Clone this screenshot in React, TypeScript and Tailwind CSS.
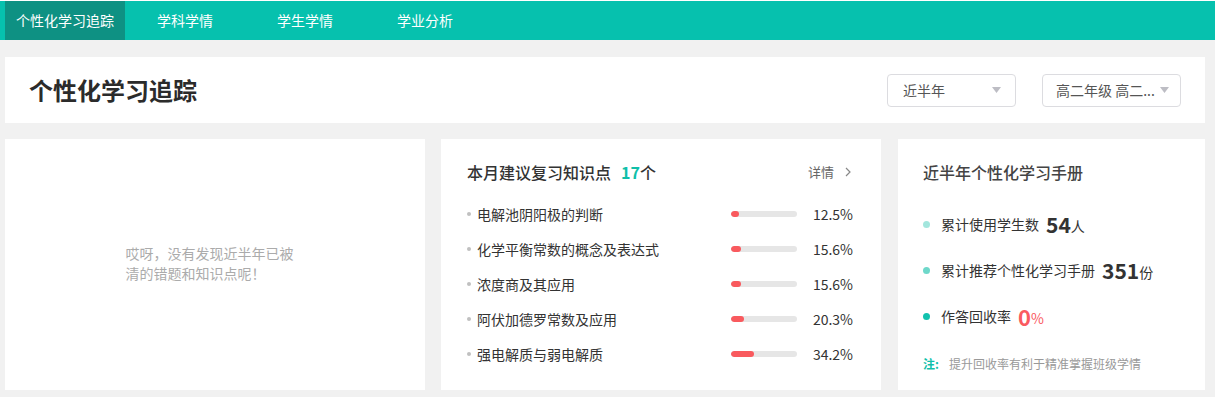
import React from 'react';

const FONT = '"Noto Sans CJK SC", "Noto Sans", "Liberation Sans", sans-serif';

const tabs = ['个性化学习追踪', '学科学情', '学生学情', '学业分析'];

const points = [
  { name: '电解池阴阳极的判断', pct: 12.5 },
  { name: '化学平衡常数的概念及表达式', pct: 15.6 },
  { name: '浓度商及其应用', pct: 15.6 },
  { name: '阿伏加德罗常数及应用', pct: 20.3 },
  { name: '强电解质与弱电解质', pct: 34.2 },
];

const stats = [
  { label: '累计使用学生数', value: '54', unit: '人', dot: 'bg-[#a3e6dd]', red: false },
  { label: '累计推荐个性化学习手册', value: '351', unit: '份', dot: 'bg-[#6ed8ca]', red: false },
  { label: '作答回收率', value: '0', unit: '%', dot: 'bg-[#12c2ae]', red: true },
];

const Caret: React.FC = () => (
  <svg width="9" height="6" viewBox="0 0 9 6" className="shrink-0">
    <path d="M0 0 L9 0 L4.5 6 Z" fill="#bdbdc4" />
  </svg>
);

const Select: React.FC<{ label: string; className?: string }> = ({ label, className }) => (
  <div
    className={`flex h-[33px] items-center justify-between rounded border border-[#dcdce0] bg-white ${className}`}
  >
    <span className="truncate text-[14px] text-[#555]">{label}</span>
    <Caret />
  </div>
);

const App: React.FC = () => {
  return (
    <div className="min-h-[397px] bg-[#f1f1f1]" style={{ fontFamily: FONT }}>
      {/* top nav */}
      <div className="border-t border-white bg-[#06c1ae]">
        <nav className="flex h-[39px] pl-[5px]">
          {tabs.map((t, i) => (
            <div
              key={t}
              className={`flex w-[120px] items-center justify-center text-[14px] text-white ${i === 0 ? 'bg-[#0e9183]' : ''}`}
            >
              {t}
            </div>
          ))}
        </nav>
      </div>

      <div className="pl-[5px] pr-[10px] pt-[17px]">
        {/* page header */}
        <header className="flex h-[66px] items-center justify-between bg-white pl-6 pr-6">
          <h1 className="text-[24px] font-bold text-[#2b2b2b]">个性化学习追踪</h1>
          <div className="flex items-center gap-[26px]">
            <Select label="近半年" className="w-[129px] pl-[15px] pr-[14px]" />
            <Select label="高二年级 高二..." className="w-[139px] pl-[13px] pr-[11px]" />
          </div>
        </header>

        {/* cards */}
        <div className="mt-4 flex h-[251px] gap-4">
          <section className="flex w-[420px] items-center justify-center bg-white">
            <p className="ml-[-9px] mt-[-3px] w-[170px] text-[14px] leading-[20px] text-[#ababab]">
              哎呀，没有发现近半年已被清的错题和知识点呢！
            </p>
          </section>

          <section className="w-[440px] bg-white pl-[26px] pr-[28px] pt-[22px]">
            <div className="flex h-[22px] items-center justify-between">
              <h2 className="text-[16px] font-medium text-[#333]">
                本月建议复习知识点
                <span className="ml-[10px] font-bold text-[#0fbfa9]">17</span>个
              </h2>
              <div className="mr-[2px] flex items-center gap-[11px] text-[13px] text-[#666]">
                详情
                <svg width="6" height="10" viewBox="0 0 6 10">
                  <path d="M1 1 L5 5 L1 9" fill="none" stroke="#888" strokeWidth="1.2" />
                </svg>
              </div>
            </div>
            <ul className="mt-[21px] flex flex-col gap-[15px]">
              {points.map((p) => (
                <li key={p.name} className="flex h-5 items-center">
                  <span className="h-1 w-1 rounded-full bg-[#c0c0c0]" />
                  <span className="ml-[6px] flex-1 text-[14px] text-[#333]">{p.name}</span>
                  <div className="h-[6px] w-[66px] overflow-hidden rounded-full bg-[#e6e6e6]">
                    <div
                      className="h-full rounded-full bg-[#f95a5e]"
                      style={{ width: `${p.pct}%`, minWidth: 8 }}
                    />
                  </div>
                  <span className="w-[56px] text-right text-[14px] text-[#333]">{p.pct}%</span>
                </li>
              ))}
            </ul>
          </section>

          <section className="ml-px flex-1 bg-white pl-[25px] pt-[22px]">
            <h2 className="flex h-[22px] items-center text-[16px] font-medium text-[#444]">
              近半年个性化学习手册
            </h2>
            <ul className="mt-[29px] flex flex-col gap-[22px]">
              {stats.map((s) => (
                <li key={s.label} className="flex h-6 items-center leading-6">
                  <span className={`mr-[11px] h-[7px] w-[7px] rounded-full ${s.dot}`} />
                  <span className="text-[14px] text-[#333]">{s.label}</span>
                  <span
                    className={`ml-[7px] font-bold leading-6 ${s.red ? 'text-[22px] text-[#fa5a5f]' : 'text-[21px] text-[#333]'}`}
                  >
                    {s.value}
                  </span>
                  <span className={`mt-[3px] text-[14px] ${s.red ? 'text-[#fa5a5f]' : 'text-[#333]'}`}>
                    {s.unit}
                  </span>
                </li>
              ))}
            </ul>
            <p className="mt-[27px] text-[12px] leading-[17px] text-[#999]">
              <span className="font-bold text-[#10bfaa]">注:</span>
              <span className="ml-[10px]">提升回收率有利于精准掌握班级学情</span>
            </p>
          </section>
        </div>
      </div>
    </div>
  );
};

export default App;
